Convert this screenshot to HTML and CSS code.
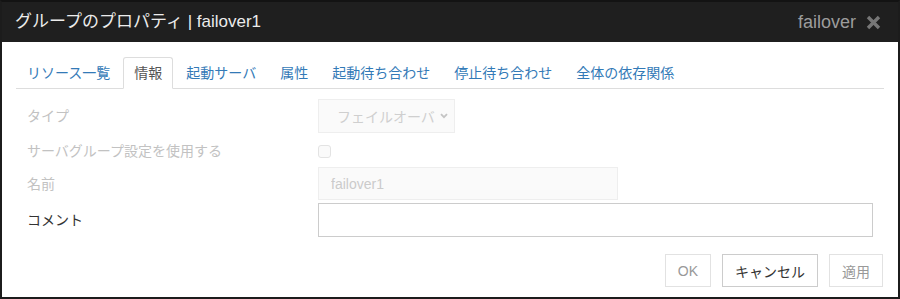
FILE: index.html
```html
<!DOCTYPE html>
<html lang="ja">
<head>
  <meta charset="UTF-8" />
  <meta name="viewport" content="width=device-width, initial-scale=1.0">
  <title>グループのプロパティ</title>
  <link rel="stylesheet" href="styles.css">
</head>
<body>

  <div class="dialog">
    <div class="dialog-header">
      <span class="dialog-title">グループのプロパティ | failover1</span>
      <span class="header-right">
        <span class="group-name">failover</span>
        <svg class="close-icon" width="17" height="15" viewBox="0 0 17 15">
          <path d="M3 2 L14 13 M14 2 L3 13" stroke="#777" stroke-width="3.4" stroke-linecap="butt" />
        </svg>
      </span>
    </div>

    <div class="dialog-body">
      <ul class="tabs">
        <li><a>リソース一覧</a></li>
        <li class="active"><a>情報</a></li>
        <li><a>起動サーバ</a></li>
        <li><a>属性</a></li>
        <li><a>起動待ち合わせ</a></li>
        <li><a>停止待ち合わせ</a></li>
        <li><a>全体の依存関係</a></li>
      </ul>

      <div class="form">
        <div class="row row-type">
          <label class="muted">タイプ</label>
          <div class="fake-select">
            <span>フェイルオーバ</span>
            <svg width="8" height="6" viewBox="0 0 8 6">
              <path d="M1 1.2 L4 4.2 L7 1.2" fill="none" stroke="#c4c4c4" stroke-width="1.8" />
            </svg>
          </div>
        </div>
        <div class="row row-check">
          <label class="muted">サーバグループ設定を使用する</label>
          <span class="checkbox"></span>
        </div>
        <div class="row row-name">
          <label class="muted">名前</label>
          <input class="text-input" type="text" value="failover1" disabled>
        </div>
        <div class="row row-comment">
          <label>コメント</label>
          <input class="text-input comment" type="text">
        </div>
      </div>

      <div class="footer">
        <button class="btn" disabled>OK</button>
        <button class="btn">キャンセル</button>
        <button class="btn" disabled>適用</button>
      </div>
    </div>
  </div>

</body>
</html>
```

FILE: styles.css
```css
body {
  margin: 0;
  font-family: "Liberation Sans", "Noto Sans CJK JP", sans-serif;
  background: #fff;
}

.dialog {
  width: 900px;
  height: 299px;
  box-sizing: border-box;
  border: 2px solid #1c1c1c;
  border-top-color: #131313;
  display: flex;
  flex-direction: column;
}

.dialog-header {
  height: 40px;
  background: #1f1f1f;
  display: flex;
  align-items: center;
  justify-content: space-between;
  padding: 0 16px 0 13px;
}

.dialog-title {
  color: #ececec;
  font-size: 17px;
  line-height: 20px;
}

.header-right {
  display: flex;
  align-items: center;
  gap: 9px;
}

.group-name {
  color: #9c9c9c;
  font-size: 18px;
  line-height: 20px;
}

.close-icon {
  display: block;
}

.dialog-body {
  flex: 1;
  padding: 15px 14px 0 14px;
  display: flex;
  flex-direction: column;
}

/* tabs */
.tabs {
  list-style: none;
  margin: 0;
  padding: 0;
  display: flex;
  border-bottom: 1px solid #ddd;
  width: 868px;
}

.tabs li {
  margin-right: 2px;
  margin-bottom: -1px;
}

.tabs a {
  display: block;
  font-size: 14px;
  line-height: 20px;
  padding: 5px 10px;
  color: #337ab7;
  border: 1px solid transparent;
  border-radius: 3px 3px 0 0;
  cursor: pointer;
}

.tabs li.active a {
  color: #555;
  background: #fff;
  border-color: #ddd;
  border-bottom-color: transparent;
}

/* form */
.form {
  padding: 10px 11px 0 11px;
  width: 846px;
}

.row {
  display: grid;
  grid-template-columns: 291px 1fr;
  align-items: center;
}

.row label {
  font-size: 14px;
  line-height: 20px;
  color: #333;
}

.row label.muted {
  color: #c2c2c2;
}

.row-type {
  height: 34px;
  margin-bottom: 6px;
}

.row-check {
  height: 24px;
  margin-bottom: 4px;
}

.row-name {
  height: 33px;
  margin-bottom: 3px;
}

.row-comment {
  height: 34px;
}

.fake-select {
  width: 137px;
  height: 34px;
  box-sizing: border-box;
  background: #fafafa;
  border: 1px solid #eee;
  display: flex;
  align-items: center;
  justify-content: space-between;
  padding: 0 6px 0 18px;
  font-size: 14px;
  color: #cfcfcf;
}

.checkbox {
  width: 13px;
  height: 13px;
  box-sizing: border-box;
  border: 1px solid #e3e3e3;
  border-radius: 3px;
  background: #fafafa;
}

.text-input {
  width: 300px;
  height: 33px;
  box-sizing: border-box;
  border: 1px solid #eee;
  background: #fafafa;
  color: #cbcbcb;
  padding: 0 12px;
  font-family: inherit;
  font-size: 14px;
  margin: 0;
}

.text-input.comment {
  width: 100%;
  height: 34px;
  background: #fff;
  border-color: #ccc;
  color: #333;
}

/* footer buttons */
.footer {
  display: flex;
  justify-content: flex-end;
  gap: 11px;
  margin-top: 17px;
  padding-right: 1px;
}

.btn {
  height: 33px;
  padding: 0 12px;
  font-family: inherit;
  font-size: 14px;
  background: #fff;
  color: #333;
  border: 1px solid #ccc;
  border-radius: 0;
  cursor: pointer;
}

.btn:disabled {
  color: #999;
  border-color: #e2e2e2;
  cursor: default;
}
```
